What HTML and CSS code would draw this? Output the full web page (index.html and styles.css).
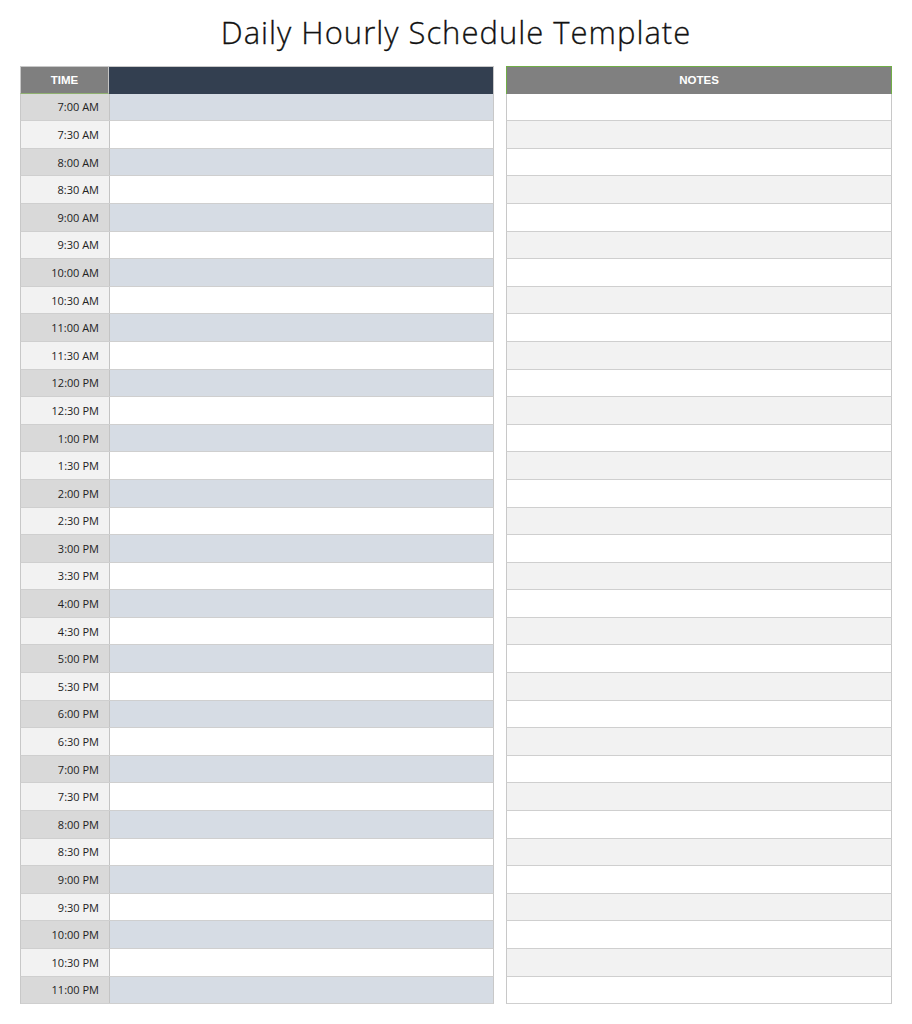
FILE: index.html
```html
<!DOCTYPE html>
<html lang="en">
<head>
<meta charset="utf-8">
<title>Daily Hourly Schedule Template</title>
<link rel="stylesheet" href="styles.css">
</head>
<body>
<div class="page">
  <h1 class="title">Daily Hourly Schedule Template</h1>
  <div class="sheets">
    <div class="schedule" id="schedule">
      <div class="row head">
        <div class="cell time-h">TIME</div>
        <div class="cell main-h"></div>
      </div>
    </div>
    <div class="notes" id="notes">
      <div class="row head">
        <div class="cell notes-h">NOTES</div>
      </div>
    </div>
  </div>
</div>
<script src="script.js"></script>
</body>
</html>
```
FILE: script.js
```js
(function () {
  var times = [];
  for (var h = 7; h <= 23; h++) {
    for (var m = 0; m < 60; m += 30) {
      if (h === 23 && m === 30) break;
      var hh = h % 12 === 0 ? 12 : h % 12;
      var ap = h < 12 ? 'AM' : 'PM';
      times.push(hh + ':' + (m === 0 ? '00' : '30') + ' ' + ap);
    }
  }
  var s = document.getElementById('schedule');
  var n = document.getElementById('notes');
  times.forEach(function (t, i) {
    var odd = i % 2 === 0 ? 'a' : 'b';
    var r = document.createElement('div');
    r.className = 'row ' + odd;
    r.innerHTML = '<div class="cell time">' + t + '</div><div class="cell main"></div>';
    s.appendChild(r);
    var r2 = document.createElement('div');
    r2.className = 'row ' + odd;
    r2.innerHTML = '<div class="cell note"></div>';
    n.appendChild(r2);
  });
})();
```
FILE: styles.css
```css
html, body { margin: 0; padding: 0; background: #ffffff; }
.page { width: 912px; }
.title {
  margin: 0;
  height: 66px;
  line-height: 64px;
  text-align: center;
  font-family: "Open Sans", "DejaVu Sans", sans-serif;
  font-weight: 300;
  font-size: 31px;
  color: #111;
  letter-spacing: 1px;
  -webkit-text-stroke: 0.3px #111;
}
.sheets {
  display: grid;
  grid-template-columns: 474px 386px;
  column-gap: 12px;
  padding: 0 20px;
}
.schedule, .notes { display: flex; flex-direction: column; }
.row { display: flex; height: 27.6px; box-sizing: border-box; }
.cell { box-sizing: border-box; }
.schedule .row { border-left: 1px solid #c8c8c8; border-right: 1px solid #c8c8c8; }
.notes .row { border-left: 1px solid #c8c8c8; border-right: 1px solid #c8c8c8; }
.row.a, .row.b { border-bottom: 1px solid #cfcfcf; }
.time-h, .time {
  width: 89px;
  border-right: 1px solid #c4c4c4;
  display: flex; align-items: center; justify-content: flex-end;
}
.time-h {
  justify-content: center;
  background: #7f7f7f;
  color: #fff;
  font-family: "Liberation Sans", Arial, sans-serif;
  font-weight: bold;
  font-size: 11.5px;
  border-bottom: 1px solid #8fb070;
}
.main-h { flex: 1; background: #333f50; }
.schedule .head { border-left: 0; border-right: 0; border-top: 1px solid #c8c8c8; }
.schedule .head .time-h { border-left: 1px solid #c8c8c8; }
.schedule .head .main-h { border-right: 1px solid #c8c8c8; }
.time {
  padding-right: 10px;
  font-family: "Open Sans", "DejaVu Sans", sans-serif;
  font-size: 11px;
  color: #222;
  letter-spacing: 0;
}
.main { flex: 1; }
.schedule .a .time { background: #d9d9d9; }
.schedule .b .time { background: #f2f2f2; }
.schedule .a .main { background: #d6dce4; }
.schedule .b .main { background: #ffffff; }
.notes .head { border: 1px solid #70ad47; border-bottom: 0; }
.notes-h {
  flex: 1;
  background: #808080;
  color: #fff;
  font-family: "Liberation Sans", Arial, sans-serif;
  font-weight: bold;
  font-size: 11.5px;
  display: flex; align-items: center; justify-content: center;
}
.note { flex: 1; }
.notes .a .note { background: #ffffff; }
.notes .b .note { background: #f2f2f2; }
```
